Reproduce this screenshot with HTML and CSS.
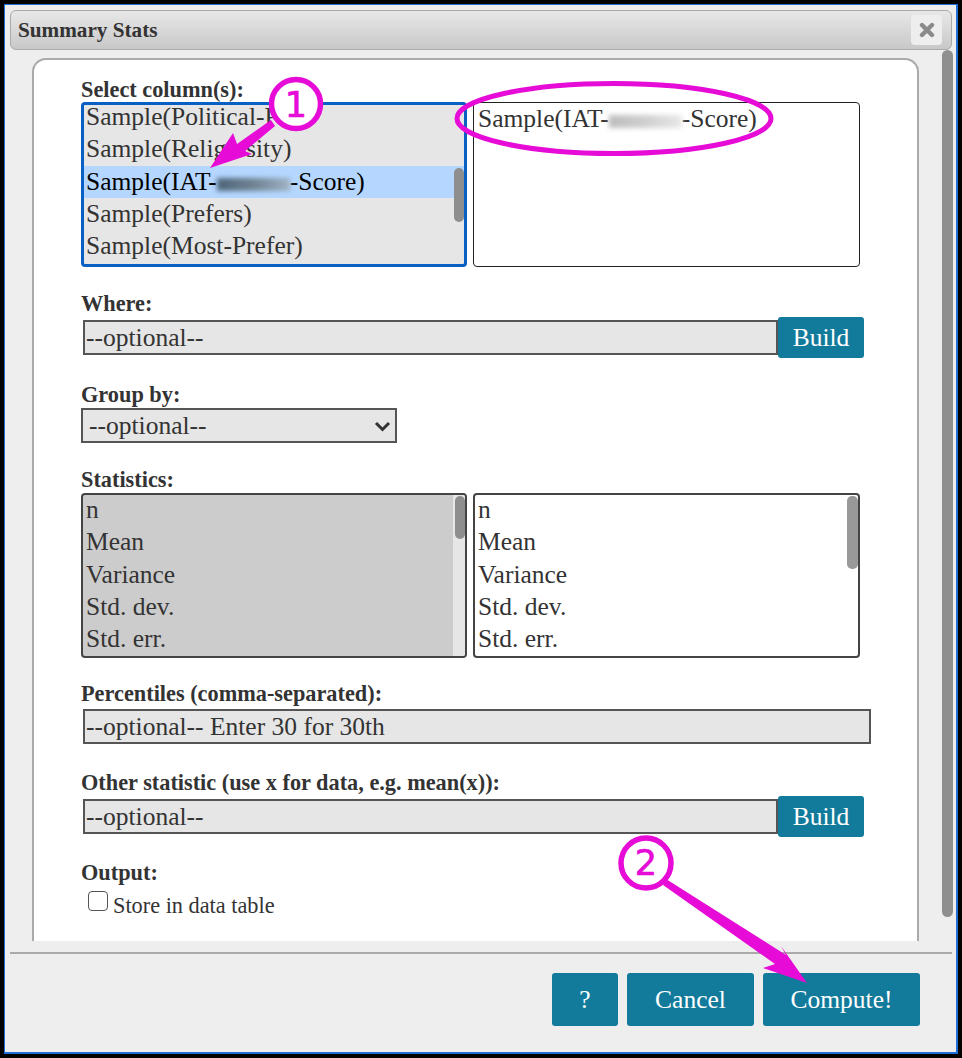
FILE: index.html
```
<!DOCTYPE html>
<html lang="en">
<head>
<meta charset="utf-8">
<title>Summary Stats</title>
<link rel="stylesheet" href="styles.css">
</head>
<body>
<div class="window">
  <header class="titlebar">
    <span class="title">Summary Stats</span>
    <button class="close" aria-label="Close">
      <svg width="16" height="16" viewBox="0 0 16 16"><path d="M3 3 L13 13 M13 3 L3 13" stroke="#8a8a8a" stroke-width="4.4" stroke-linecap="round"/></svg>
    </button>
  </header>
  <div class="body">
    <main class="panel">
      <section class="field field-columns">
        <div class="label">Select column(s):</div>
        <div class="pair">
          <div class="list list-focus">
            <div class="item">Sample(Political-P</div>
            <div class="item">Sample(Religiosity)</div>
            <div class="item item-active">Sample(IAT-<span class="blur blur-dark"></span>-Score)</div>
            <div class="item">Sample(Prefers)</div>
            <div class="item">Sample(Most-Prefer)</div>
            <span class="thumb thumb-cols"></span>
          </div>
          <div class="list list-right list-chosen">
            <div class="item">Sample(IAT-<span class="blur blur-light"></span>-Score)</div>
          </div>
        </div>
      </section>
      <section class="field field-where">
        <div class="label">Where:</div>
        <div class="build-row">
          <input class="text text-build" placeholder="--optional--">
          <button class="btn btn-build">Build</button>
        </div>
      </section>
      <section class="field field-group">
        <div class="label">Group by:</div>
        <div class="select-wrap">
          <select class="dropdown"><option>--optional--</option></select>
          <svg class="chevron" width="17" height="11" viewBox="0 0 17 11"><path d="M2 2 L8.5 8.5 L15 2" fill="none" stroke="#333" stroke-width="3"/></svg>
        </div>
      </section>
      <section class="field field-stats">
        <div class="label">Statistics:</div>
        <div class="pair">
          <div class="list list-stats list-bold">
            <div class="item">n</div>
            <div class="item">Mean</div>
            <div class="item">Variance</div>
            <div class="item">Std. dev.</div>
            <div class="item">Std. err.</div>
            <span class="track"></span>
            <span class="thumb thumb-stats"></span>
          </div>
          <div class="list list-right list-bold">
            <div class="item">n</div>
            <div class="item">Mean</div>
            <div class="item">Variance</div>
            <div class="item">Std. dev.</div>
            <div class="item">Std. err.</div>
            <span class="thumb thumb-right"></span>
          </div>
        </div>
      </section>
      <section class="field field-pct">
        <div class="label">Percentiles (comma-separated):</div>
        <input class="text text-wide" placeholder="--optional-- Enter 30 for 30th">
      </section>
      <section class="field field-other">
        <div class="label">Other statistic (use x for data, e.g. mean(x)):</div>
        <div class="build-row">
          <input class="text text-build" placeholder="--optional--">
          <button class="btn btn-build">Build</button>
        </div>
      </section>
      <section class="field field-output">
        <div class="label">Output:</div>
        <label class="check"><input type="checkbox" class="box"><span class="check-text">Store in data table</span></label>
      </section>
    </main>
    <div class="scrollbar"><span class="scrollbar-thumb"></span></div>
  </div>
  <footer class="footer">
    <button class="btn btn-help">?</button>
    <button class="btn btn-cancel">Cancel</button>
    <button class="btn btn-compute">Compute!</button>
  </footer>
</div>
<svg class="annotations" width="962" height="1058" viewBox="0 0 962 1058">
  <g fill="#e60bd6">
    <polygon points="210,168 233,133 237,144 271,120 275,126 245,151 252,154"/>
    <polygon points="807,983 781,946 786,955 666,879 663,885 775,964 763,968"/>
  </g>
  <ellipse class="ring" cx="614" cy="118.5" rx="157" ry="35" stroke-width="5"/>
  <circle class="ring ring-filled" cx="296" cy="104" r="24.5" stroke-width="5.5"/>
  <circle class="ring ring-filled" cx="646" cy="863" r="25" stroke-width="5.5"/>
  <text class="digit" x="296" y="117" text-anchor="middle">1</text>
  <text class="digit" x="646" y="875" text-anchor="middle">2</text>
</svg>
</body>
</html>
```
FILE: styles.css
```
* { box-sizing: border-box; }
html, body { margin: 0; height: 100%; }
body {
  background: #000;
  padding: 4px;
  font-family: "Liberation Serif", "Times New Roman", serif;
  color: #333;
  overflow: hidden;
  position: relative;
}
.window {
  width: 954px;
  height: 1050px;
  background: #eee;
  border: 1px solid #1f6fd6;
  border-width: 1px 2px 2px 1px;
  display: flex;
  flex-direction: column;
  padding: 5px 0 0 5px;
}
.titlebar {
  width: 942px;
  height: 40px;
  flex: none;
  border: 1px solid #aaa;
  border-radius: 6px;
  background: linear-gradient(#e8e8e8, #c8c8c8);
  display: flex;
  align-items: center;
  justify-content: space-between;
  padding: 0 9px 0 7px;
}
.title { font-weight: bold; font-size: 21.2px; color: #333; }
.close {
  width: 31px;
  height: 30px;
  border: 0;
  border-radius: 4px;
  background: #eee;
  padding: 0;
  display: flex;
  align-items: center;
  justify-content: center;
}
.body { flex: 1; display: flex; min-height: 0; }
.panel {
  width: 887px;
  margin: 8px 0 0 22px;
  height: 883px;
  background: #fff;
  border: 2px solid #aaa;
  border-bottom: 0;
  border-radius: 14px 14px 0 0;
  padding: 18px 0 0 47px;
}
.scrollbar { width: 12px; margin-left: 23px; }
.scrollbar-thumb {
  display: block;
  width: 11px;
  height: 867px;
  background: #8f8f8f;
  border-radius: 6px;
}
.field { width: 800px; }
.label { font-weight: bold; font-size: 22.3px; line-height: 23px; padding-bottom: 2px; color: #333; white-space: nowrap; }
.field-columns .label { line-height: 23px; padding-bottom: 1px; }
.field-where { margin-top: 25px; }
.field-group { margin-top: 25px; }
.field-stats { margin-top: 25px; }
.field-pct { margin-top: 24px; }
.field-other { margin-top: 27px; }
.field-output { margin-top: 24px; }
.pair { display: flex; gap: 6px; }
.list {
  position: relative;
  width: 386px;
  height: 165px;
  border: 1px solid #222;
  border-radius: 4px;
  overflow: hidden;
  background: #fff;
  font-size: 25.5px;
}
.list-focus { border: 3px solid #0a5fc4; background: #e6e6e6; }
.list-right { width: 387px; }
.list-stats { background: #ccc; }
.list-bold { border: 2px solid #444; }
.item {
  height: 32.3px;
  line-height: 31px;
  padding-left: 4px;
  white-space: nowrap;
  color: #333;
  position: relative;
}
.list-focus .item { padding-left: 2px; top: -4px; }
.list-bold .item { padding-left: 3px; top: -1px; }
.item-active { background: #b5d7ff; color: #000; }
.list-focus .item-active { color: #000; }
.blur {
  display: inline-block;
  width: 73px;
  height: 13px;
  vertical-align: -1px;
  filter: blur(2.5px);
}
.blur-dark { background: linear-gradient(90deg, #4c6478, #6f8292 50%, #9fb2c4); }
.blur-light { background: linear-gradient(90deg, #bdbdbd, #cfcfcf 50%, #e8e8e8); }
.track {
  position: absolute;
  top: 0;
  right: 0;
  width: 12px;
  height: 100%;
  background: #e6e6e6;
}
.thumb {
  position: absolute;
  width: 10px;
  border-radius: 5px;
  background: #8e8e8e;
}
.thumb-cols { right: 0; top: 63px; height: 54px; }
.thumb-stats { right: 0; top: 1px; height: 43px; }
.thumb-right { right: 0; top: 1px; height: 73px; width: 11px; background: #999; }
.text {
  height: 35px;
  border: 2px solid #555;
  background: #e6e6e6;
  font-family: inherit;
  font-size: 25.5px;
  color: #333;
  padding: 0 1px;
  border-radius: 0;
  outline: 0;
}
.text::placeholder { color: #333; opacity: 1; }
.build-row { display: flex; align-items: center; padding-left: 2px; }
.text-build { width: 695px; }
.text-wide { width: 788px; margin: 2px 0 0 2px; display: block; }
.btn {
  background: #127a9b;
  color: #fff;
  border: 0;
  border-radius: 3px;
  font-family: inherit;
  font-size: 25.5px;
  padding: 0;
}
.btn-build { width: 86px; height: 41px; }
.select-wrap { position: relative; width: 316px; }
.dropdown {
  appearance: none;
  display: block;
  width: 316px;
  height: 35px;
  border: 2px solid #555;
  background-color: #e6e6e6;
  font-family: inherit;
  font-size: 25.5px;
  color: #333;
  border-radius: 0;
  padding: 0 0 0 6px;
}
.chevron { position: absolute; right: 6px; top: 13px; pointer-events: none; }
.check { display: flex; align-items: flex-start; padding-left: 7px; margin-top: 5px; font-size: 22.3px; line-height: 24px; }
.box {
  appearance: none;
  flex: none;
  width: 20px;
  height: 20px;
  margin: 0 5px 0 0;
  border: 1.5px solid #555;
  border-radius: 4px;
  background: #fff;
}
.check-text { margin-top: 3px; }
.footer {
  flex: none;
  width: 942px;
  height: 100px;
  border-top: 2px solid #aaa;
  display: flex;
  gap: 9px;
  padding: 19px 0 0 542px;
}
.footer .btn { height: 53px; }
.btn-help { width: 66px; }
.btn-cancel { width: 127px; }
.btn-compute { width: 157px; }
.annotations { position: absolute; left: 0; top: 0; pointer-events: none; }
.ring { fill: none; stroke: #e60bd6; }
.ring-filled { fill: #fff; }
.digit { font-family: "DejaVu Sans", sans-serif; font-size: 35px; fill: #e60bd6; stroke: #e60bd6; stroke-width: 0.7px; }
```
